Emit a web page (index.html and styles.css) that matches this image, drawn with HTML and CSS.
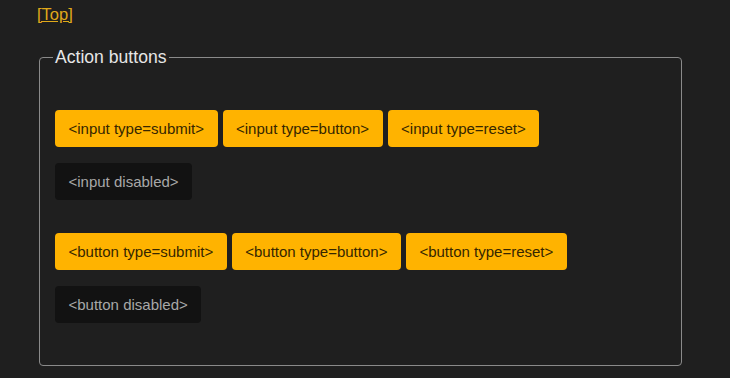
FILE: index.html
```html
<!DOCTYPE html>
<html lang="en">
<head>
    <meta charset="UTF-8">
    <title>Action buttons</title>
    <link rel="stylesheet" href="styles.css">
</head>
<body>
    <p class="top-link"><a href="#top">[Top]</a></p>

    <fieldset class="action-set">
        <legend>Action buttons</legend>

        <div class="btn-group">
            <div class="btn-row">
                <input class="btn" type="submit" value="<input type=submit>">
                <input class="btn" type="button" value="<input type=button>">
                <input class="btn" type="reset" value="<input type=reset>">
            </div>
            <div class="btn-row">
                <input class="btn" type="button" value="<input disabled>" disabled>
            </div>
        </div>

        <div class="btn-group">
            <div class="btn-row">
                <button class="btn" type="submit">&lt;button type=submit&gt;</button>
                <button class="btn" type="button">&lt;button type=button&gt;</button>
                <button class="btn" type="reset">&lt;button type=reset&gt;</button>
            </div>
            <div class="btn-row">
                <button class="btn" type="button" disabled>&lt;button disabled&gt;</button>
            </div>
        </div>
    </fieldset>
</body>
</html>
```

FILE: styles.css
```css
body {
    margin: 0;
    background: #1f1f1f;
    font-family: "Liberation Sans", Arial, sans-serif;
    color: #e6e6e6;
}

.top-link {
    margin: 5px 0 0 37px;
    font-size: 16.5px;
    line-height: 18px;
}

.top-link a {
    color: #e0a91a;
}

.action-set {
    margin: 24px 48px 0 39px;
    padding: 0 15px 42px 15px;
    border: 1px solid #8a8a8a;
    border-radius: 4px;
}

.action-set legend {
    padding: 0 2px;
    margin-left: -2px;
    font-size: 17.6px;
    line-height: 20px;
    color: #e6e6e6;
}

.btn-group {
    display: flex;
    flex-direction: column;
    gap: 16px;
    margin-top: 43px;
}

.btn-group + .btn-group {
    margin-top: 33px;
}

.btn-row {
    display: flex;
    gap: 5px;
}

.btn {
    margin: 0;
    padding: 10px 13.5px;
    border: none;
    border-radius: 4px;
    background: #ffb300;
    color: #352600;
    font-family: "Liberation Sans", Arial, sans-serif;
    font-size: 15px;
    line-height: 17px;
    cursor: pointer;
}

.btn:disabled {
    background: #121212;
    color: #a8a8a8;
    cursor: default;
}
```
